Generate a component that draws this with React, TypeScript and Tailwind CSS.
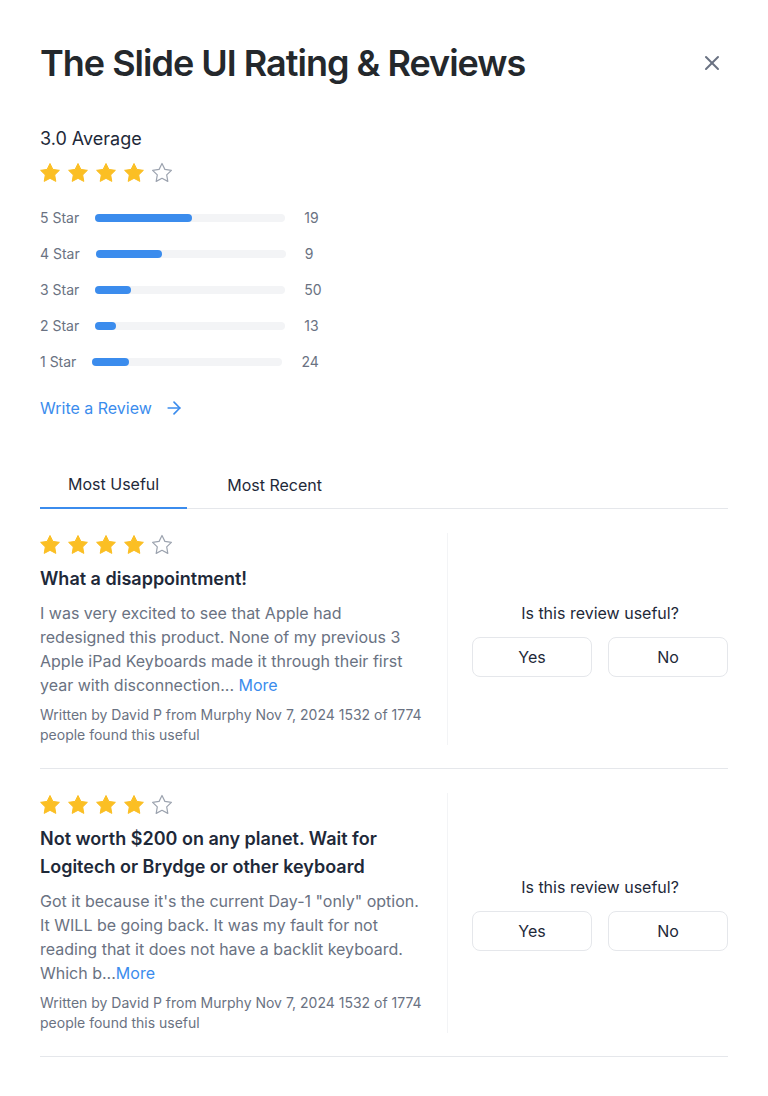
import { ArrowRight, X } from 'lucide-react';

const STAR_PATH =
  'M12 2.5l2.9 5.88 6.5.95-4.7 4.58 1.1 6.47L12 17.33l-5.8 3.05 1.1-6.47-4.7-4.58 6.5-.95L12 2.5z';

function Stars({ rating }: { rating: number }) {
  return (
    <div className="flex gap-1">
      {[1, 2, 3, 4, 5].map((i) =>
        i <= rating ? (
          <svg key={i} viewBox="0 0 24 24" className="w-6 h-6">
            <path d={STAR_PATH} fill="#fbbf24" stroke="#fbbf24" strokeWidth="1" strokeLinejoin="round" />
          </svg>
        ) : (
          <svg key={i} viewBox="0 0 24 24" className="w-6 h-6">
            <path d={STAR_PATH} fill="none" stroke="#9ca3af" strokeWidth="1.2" strokeLinejoin="round" />
          </svg>
        )
      )}
    </div>
  );
}

const breakdown = [
  { label: '5 Star', pct: 51, count: 19 },
  { label: '4 Star', pct: 35, count: 9 },
  { label: '3 Star', pct: 19, count: 50 },
  { label: '2 Star', pct: 11, count: 13 },
  { label: '1 Star', pct: 19, count: 24 },
];

const reviews = [
  {
    rating: 4,
    title: 'What a disappointment!',
    body: 'I was very excited to see that Apple had redesigned this product. None of my previous 3 Apple iPad Keyboards made it through their first year with disconnection...',
    more: ' More',
  },
  {
    rating: 4,
    title: 'Not worth $200 on any planet. Wait for Logitech or Brydge or other keyboard',
    body: 'Got it because it\'s the current Day-1 "only" option. It WILL be going back. It was my fault for not reading that it does not have a backlit keyboard. Which b...',
    more: 'More',
  },
];

export default function App() {
  return (
    <div className="min-h-screen bg-white px-10 pt-[43px] pb-10 text-gray-800" style={{ fontFamily: 'Inter, "Noto Sans", sans-serif' }}>
      <div className="flex items-center justify-between">
        <h1 className="text-[36px] leading-10 font-semibold tracking-[-1px] text-[#24282c]">
          The Slide UI Rating &amp; Reviews
        </h1>
        <button className="p-1 text-gray-500">
          <X className="w-6 h-6" strokeWidth={2} />
        </button>
      </div>

      <div className="mt-[42px]">
        <p className="text-lg leading-7 text-gray-800">3.0 Average</p>
        <div className="mt-2 -ml-0.5">
          <Stars rating={4} />
        </div>

        <div className="mt-[23px] flex flex-col gap-4">
          {breakdown.map((row) => (
            <div key={row.label} className="flex items-center gap-4 text-sm leading-5 text-gray-500">
              <span>{row.label}</span>
              <div className="w-[190px] h-2 rounded-full bg-gray-100">
                <div className="h-2 rounded-full bg-[#3b8ced]" style={{ width: `${row.pct}%` }} />
              </div>
              <span className="ml-[3px]">{row.count}</span>
            </div>
          ))}
        </div>

        <a href="#" className="mt-6 inline-flex items-center gap-3 text-base leading-6 text-[#3b8ced]">
          Write a Review
          <ArrowRight className="w-5 h-5" strokeWidth={2} />
        </a>
      </div>

      <div className="mt-10 flex gap-3 border-b border-gray-200">
        <button className="px-7 pt-3 pb-[11px] text-base leading-6 text-gray-800 border-b-2 border-[#3b8ced] -mb-px">
          Most Useful
        </button>
        <button className="px-7 pt-3 pb-[11px] text-base leading-6 text-gray-800">Most Recent</button>
      </div>

      {reviews.map((r, idx) => (
        <div key={idx} className="pt-6 pb-[23px] border-b border-gray-200 flex">
          <div className="flex-1 pr-6 border-r border-gray-100">
            <div className="-ml-0.5">
              <Stars rating={r.rating} />
            </div>
            <h3 className="mt-2 text-lg leading-7 font-semibold text-gray-800">{r.title}</h3>
            <p className="mt-2 text-base leading-6 text-gray-500">
              {r.body}
              <span className="text-[#3b8ced]">{r.more}</span>
            </p>
            <p className="mt-2 text-sm leading-5 text-gray-500">
              Written by David P from Murphy Nov 7, 2024 1532 of 1774 people found this useful
            </p>
          </div>
          <div className="w-[280px] pl-6 flex flex-col justify-center">
            <p className="text-center text-base leading-6 text-gray-800">Is this review useful?</p>
            <div className="mt-3 flex gap-4">
              <button className="flex-1 h-10 rounded-lg border border-gray-200 text-base text-gray-800">Yes</button>
              <button className="flex-1 h-10 rounded-lg border border-gray-200 text-base text-gray-800">No</button>
            </div>
          </div>
        </div>
      ))}
    </div>
  );
}
